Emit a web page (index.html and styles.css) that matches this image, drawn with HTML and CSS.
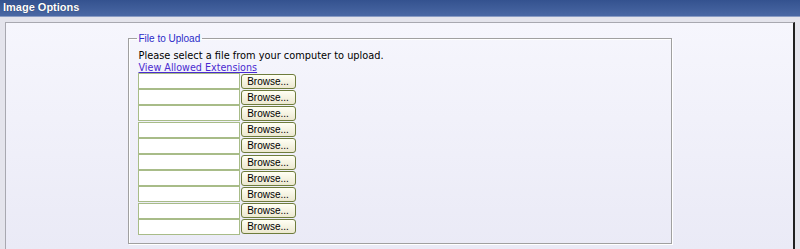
FILE: index.html
```html
<!DOCTYPE html>
<html>
  <head>
    <meta charset='utf-8'>
    <title>Image Options</title>
    <link rel="stylesheet" href="styles.css">
  </head>
  <body>
    <div class='title_bar'>Image Options</div>
    <div class='panel'>
      <fieldset class='upload_box'>
        <legend>File to Upload</legend>
        <div class='intro'>Please select a file from your computer to upload.</div>
        <a class='ext_link' href='#'>View Allowed Extensions</a>
        <div class='file_rows'>
          <div class='file_row'><span class='file_text'></span><span class='browse'>Browse...</span></div>
          <div class='file_row'><span class='file_text'></span><span class='browse'>Browse...</span></div>
          <div class='file_row'><span class='file_text'></span><span class='browse'>Browse...</span></div>
          <div class='file_row'><span class='file_text'></span><span class='browse'>Browse...</span></div>
          <div class='file_row'><span class='file_text'></span><span class='browse'>Browse...</span></div>
          <div class='file_row'><span class='file_text'></span><span class='browse'>Browse...</span></div>
          <div class='file_row'><span class='file_text'></span><span class='browse'>Browse...</span></div>
          <div class='file_row'><span class='file_text'></span><span class='browse'>Browse...</span></div>
          <div class='file_row'><span class='file_text'></span><span class='browse'>Browse...</span></div>
          <div class='file_row'><span class='file_text'></span><span class='browse'>Browse...</span></div>
        </div>
      </fieldset>
    </div>
  </body>
</html>
```

FILE: styles.css
```css
body {
  margin: 0;
  background: #e4e4ec;
  font-family: "DejaVu Sans", sans-serif;
  height: 249px;
  overflow: hidden;
}

.title_bar {
  height: 16px;
  line-height: 15px;
  padding-left: 3px;
  background: linear-gradient(#34528f, #4a68a4);
  color: #fff;
  font-family: "Liberation Sans", sans-serif;
  font-weight: bold;
  font-size: 11px;
  text-shadow: 0 0 1px #1c2c50;
  border-bottom: 1px solid #8a9cc4;
}

.panel {
  margin: 5px 5px 0 5px;
  height: 227px;
  border-top: 1px solid #a8a8b0;
  border-left: 1px solid #a8a8b0;
  border-right: 2px solid #202020;
  background: linear-gradient(#f6f6fd, #eaeaf6);
  padding-top: 10px;
  box-sizing: border-box;
}

.upload_box {
  width: 544px;
  margin: 0 auto;
  padding: 6px 10px 8px 9px;
  border: 1px solid #a0a0a0;
  box-shadow: 1px 1px 0 #fff, inset 1px 1px 0 #fff;
  box-sizing: border-box;
}

.upload_box legend {
  color: #2a2ac8;
  font-family: "Liberation Sans", sans-serif;
  font-size: 10px;
  padding: 0 2px;
  margin-left: -1px;
}

.intro {
  font-size: 9.8px;
  color: #000;
  line-height: 12px;
  padding-left: 1px;
}

.ext_link {
  display: block;
  font-size: 9.6px;
  line-height: 11px;
  padding-left: 1px;
  color: #4a2ad0;
  text-decoration: underline;
}

.file_rows {
  display: flex;
  flex-direction: column;
}

.file_row {
  display: flex;
  align-items: center;
  height: 16.2px;
}

.file_text {
  width: 102px;
  height: 16px;
  border: 1px solid #a8bc88;
  background: #fff;
  box-sizing: border-box;
}

.browse {
  width: 55px;
  height: 15px;
  margin-left: 1px;
  border: 1px solid #6e7c3c;
  border-radius: 3px;
  background: linear-gradient(#fffff4, #ece8d0);
  box-sizing: border-box;
  font-family: "Liberation Sans", sans-serif;
  font-size: 10px;
  line-height: 13px;
  text-align: center;
  color: #000;
}
```
